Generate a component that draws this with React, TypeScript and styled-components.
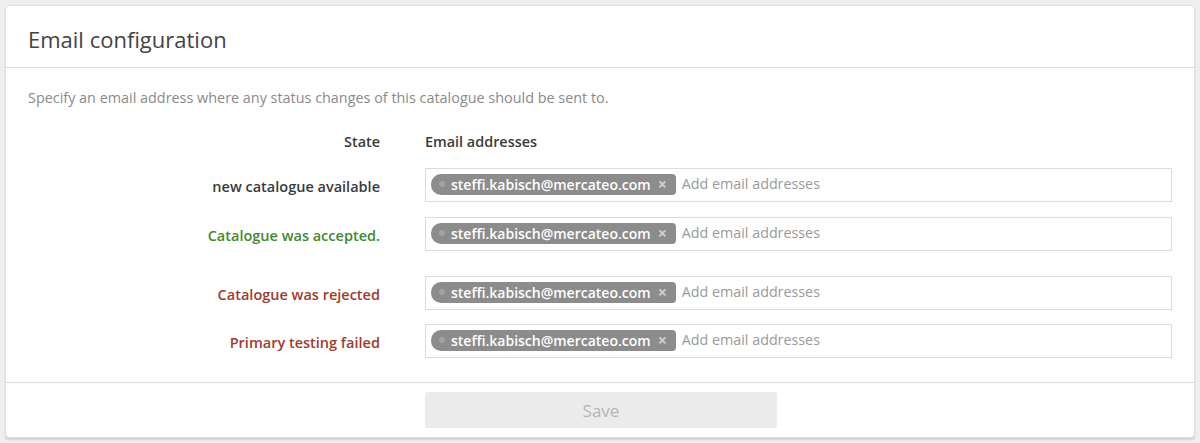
import React from "react";
import styled, { createGlobalStyle } from "styled-components";

const GlobalStyle = createGlobalStyle`
  html, body {
    margin: 0;
    padding: 0;
    background: #efefef;
    font-family: "Open Sans", Lato, Arial, sans-serif;
  }
`;

type Status = "neutral" | "success" | "danger";

const statusColors: Record<Status, string> = {
  neutral: "#3a3a3a",
  success: "#3f8a2f",
  danger: "#9e3b2f",
};

const rows: { label: string; status: Status; after: number }[] = [
  { label: "new catalogue available", status: "neutral", after: 15 },
  { label: "Catalogue was accepted.", status: "success", after: 25 },
  { label: "Catalogue was rejected", status: "danger", after: 14 },
  { label: "Primary testing failed", status: "danger", after: 15 },
];

const App: React.FC = () => {
  return (
    <>
      <GlobalStyle />
      <Page>
        <Card>
          <Header>
            <Title>Email configuration</Title>
          </Header>

          <Body>
            <Description>
              Specify an email address where any status changes of this
              catalogue should be sent to.
            </Description>

            <FormGrid>
              <HeadCell $align="right">State</HeadCell>
              <HeadCell>Email addresses</HeadCell>

              {rows.map((row) => (
                <React.Fragment key={row.label}>
                  <StateLabel $status={row.status} $after={row.after}>
                    {row.label}
                  </StateLabel>
                  <TagInput $after={row.after}>
                    <Chip>
                      <ChipDot />
                      steffi.kabisch@mercateo.com
                      <ChipRemove>×</ChipRemove>
                    </Chip>
                    <Placeholder>Add email addresses</Placeholder>
                  </TagInput>
                </React.Fragment>
              ))}
            </FormGrid>
          </Body>

          <Footer>
            <SaveButton disabled>Save</SaveButton>
          </Footer>
        </Card>
      </Page>
    </>
  );
};

export default App;

const Page = styled.div`
  padding: 5px;
`;

const Card = styled.div`
  background: #fff;
  border: 1px solid #dedede;
  border-radius: 4px;
  box-shadow: 0 2px 2px rgba(0, 0, 0, 0.12);
  display: flex;
  flex-direction: column;
`;

const Header = styled.div`
  height: 61px;
  padding: 0 22px;
  display: flex;
  align-items: center;
  border-bottom: 1px solid #dcdcdc;
`;

const Title = styled.h2`
  margin: 0;
  padding-top: 4px;
  font-size: 22px;
  font-weight: 400;
  color: #444;
`;

const Body = styled.div`
  padding: 20px 22px 9px 22px;
`;

const Description = styled.p`
  margin: 0 0 24px 0;
  font-size: 14.4px;
  line-height: 20px;
  color: #8a8a8a;
`;

const FormGrid = styled.div`
  display: grid;
  grid-template-columns: 352px 1fr;
  column-gap: 45px;
  align-items: center;
`;

const HeadCell = styled.div<{ $align?: "right" }>`
  font-size: 14.4px;
  font-weight: 600;
  color: #3a3a3a;
  line-height: 20px;
  text-align: ${({ $align }) => $align ?? "left"};
  margin-bottom: 16px;
`;

const StateLabel = styled.div<{ $status: Status; $after: number }>`
  text-align: right;
  font-size: 14.5px;
  font-weight: 600;
  color: ${({ $status }) => statusColors[$status]};
  padding-top: 3px;
  margin-bottom: ${({ $after }) => $after}px;
`;

const TagInput = styled.div<{ $after: number }>`
  height: 34px;
  box-sizing: border-box;
  border: 1px solid #dcdcdc;
  display: flex;
  align-items: center;
  gap: 6px;
  padding: 0 5px;
  margin-bottom: ${({ $after }) => $after}px;
`;

const Chip = styled.span`
  display: inline-flex;
  align-items: center;
  height: 21px;
  margin-top: -2px;
  padding: 0 9px 0 8px;
  border-radius: 10px 4px 4px 10px;
  background: #8c8c8c;
  color: #fff;
  font-size: 14px;
  font-weight: 600;
  white-space: nowrap;
`;

const ChipDot = styled.span`
  width: 6px;
  height: 6px;
  border-radius: 50%;
  background: #a3a3a3;
  margin-right: 6px;
`;

const ChipRemove = styled.span`
  margin-left: 7px;
  font-size: 16px;
  font-weight: 700;
  color: #cfcfcf;
  line-height: 1;
`;

const Placeholder = styled.span`
  font-size: 14.3px;
  color: #9a9a9a;
  margin-top: -4px;
`;

const Footer = styled.div`
  border-top: 1px solid #dcdcdc;
  padding: 9px 22px 9px 419px;
`;

const SaveButton = styled.button`
  width: 352px;
  height: 36px;
  border: none;
  border-radius: 3px;
  background: #ebebeb;
  color: #b5b5b5;
  font-family: inherit;
  font-size: 17px;
`;
